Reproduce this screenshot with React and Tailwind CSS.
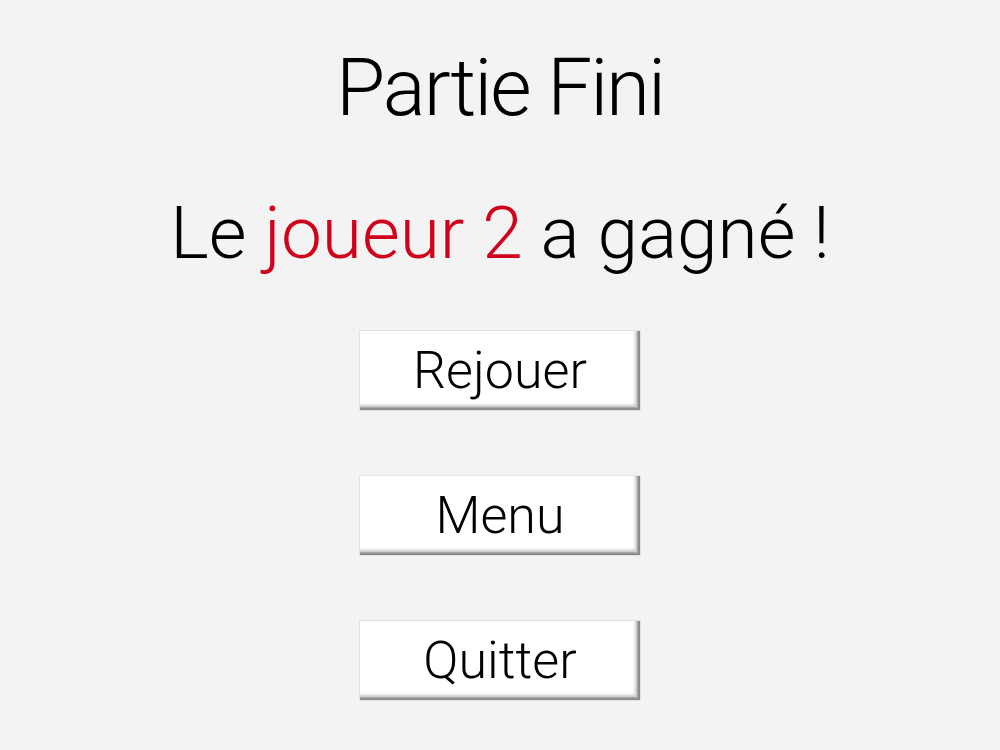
import React from "react";

const boutons = ["Rejouer", "Menu", "Quitter"];

const Bouton = ({ label }) => (
  <button className="w-[282px] h-[81px] flex items-center justify-center bg-white border border-[#e2e2e2] shadow-[inset_-1px_-1px_0_#8a8a8a,inset_-2px_-2px_0_#909090,inset_-3px_-3px_0_#a8a8a8,inset_-5px_-5px_3px_#c8c8c8] text-[52px] leading-none font-light text-black">
    {label}
  </button>
);

export default function App() {
  return (
    <div
      className="w-[1000px] h-[750px] bg-[#f3f3f3] flex flex-col items-center pt-[48px]"
      style={{ fontFamily: "Roboto, 'Liberation Sans', sans-serif" }}
    >
      <h1 className="text-[80px] leading-none font-light tracking-[-2px] text-black">
        Partie Fini
      </h1>
      <p className="mt-[69px] text-[73px] leading-none font-light text-black">
        Le <span className="text-[#d0021b]">joueur 2</span> a gagné !
      </p>
      <div className="mt-[60px] flex flex-col items-center gap-[64px]">
        {boutons.map((b) => (
          <Bouton key={b} label={b} />
        ))}
      </div>
    </div>
  );
}
